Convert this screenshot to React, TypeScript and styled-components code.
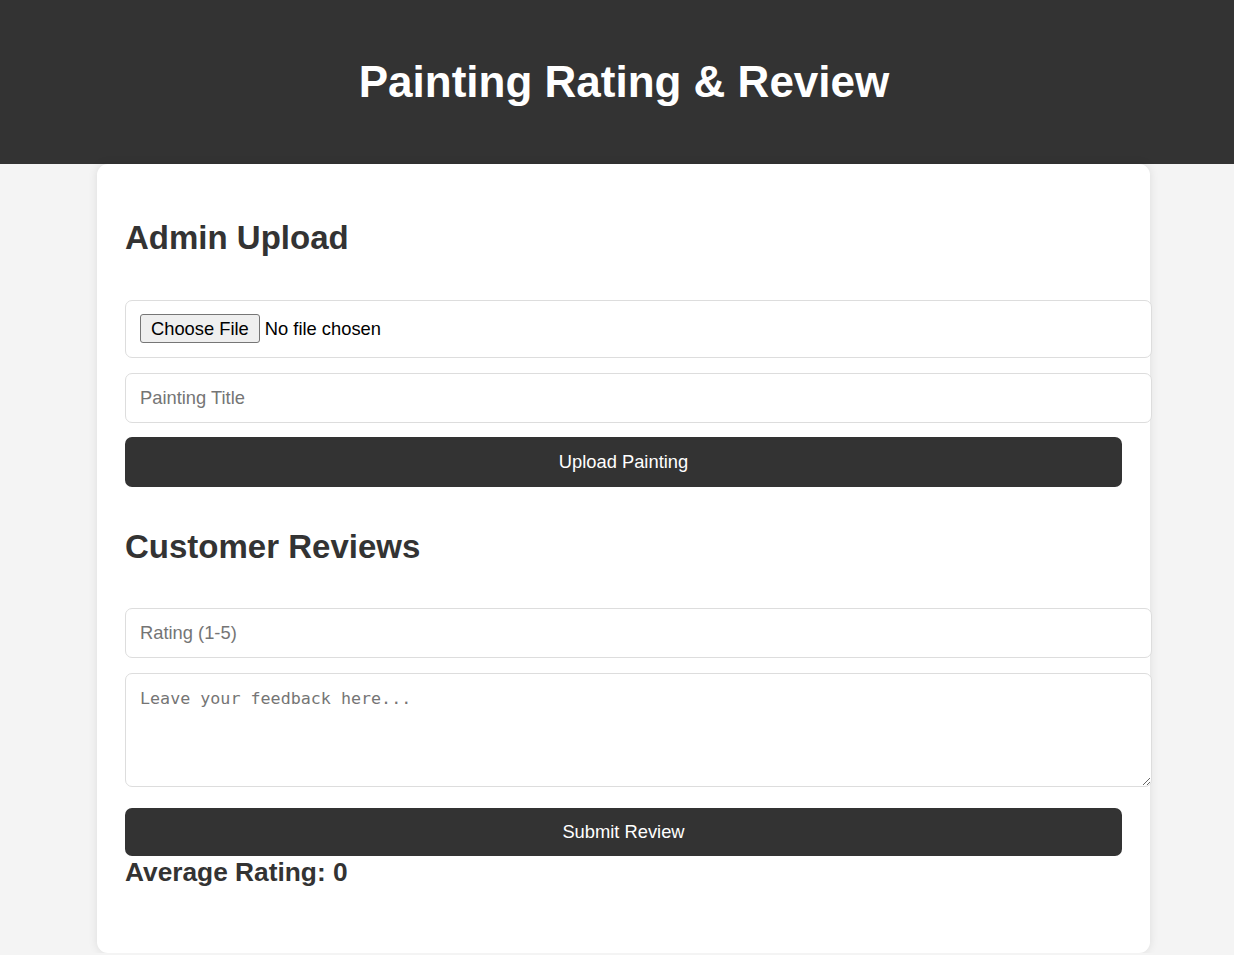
import React from "react";
import styled, { createGlobalStyle } from "styled-components";

const GlobalStyle = createGlobalStyle`
  html, body {
    margin: 0;
    padding: 0;
    background: #f4f4f4;
    font-family: "Liberation Sans", Arial, sans-serif;
    color: #333;
  }
  * { box-sizing: border-box; }
`;

const Header = styled.header`
  background: #333;
  color: #fff;
  height: 164px;
  padding: 56px 0 0 14px;
  text-align: center;
`;

const Title = styled.h1`
  margin: 0;
  font-size: 44px;
  line-height: 51px;
  font-weight: 700;
`;

const Card = styled.main`
  display: flex;
  flex-direction: column;
  align-items: flex-start;
  margin: 0 84px 0 97px;
  padding: 28px 28px;
  background: #fff;
  border-radius: 11px;
  box-shadow: 0 0 10px rgba(0, 0, 0, 0.1);
`;

const SectionTitle = styled.h2`
  margin: 27px 0 42.5px;
  font-size: 33px;
  line-height: 38px;
  font-weight: 700;
  color: #333;
`;

const fieldBase = `
  width: calc(100% + 30px);
  border: 1px solid #ddd;
  border-radius: 7px;
  background: #fff;
  font-size: 18.33px;
`;

const FileField = styled.label`
  ${fieldBase}
  display: flex;
  align-items: center;
  height: 58px;
  padding: 14px;
  margin-bottom: 15px;
  font-family: "Liberation Sans", Arial, sans-serif;
  color: #222;
  cursor: pointer;

  input { display: none; }
`;

const FileButton = styled.span`
  display: inline-flex;
  align-items: center;
  height: 29px;
  padding: 0 10px;
  margin-right: 5px;
  border: 1px solid #767676;
  border-radius: 3px;
  background: #efefef;
  color: #000;
  font-size: 18.33px;
`;

const FileStatus = styled.span`
  color: #000;
`;

const TextInput = styled.input<{ $gap?: number }>`
  ${fieldBase}
  display: block;
  height: 50px;
  padding: 0 14px;
  margin: 0 0 ${(p) => p.$gap ?? 14}px;
  font-family: "Liberation Sans", Arial, sans-serif;
  color: #222;
  outline: none;

  &::placeholder { color: #757575; }
`;

const TextArea = styled.textarea`
  ${fieldBase}
  display: block;
  height: 114px;
  padding: 14px;
  margin: 0 0 20.5px;
  font-family: "DejaVu Sans Mono", "Liberation Mono", monospace;
  font-size: 16.7px;
  line-height: 20px;
  color: #222;
  outline: none;

  &::placeholder { color: #757575; }
`;

const ActionButton = styled.button<{ $height: number; $gap: number }>`
  display: block;
  width: 100%;
  height: ${(p) => p.$height}px;
  margin: 0 0 ${(p) => p.$gap}px;
  border: none;
  border-radius: 7px;
  background: #333;
  color: #fff;
  font-family: "Liberation Sans", Arial, sans-serif;
  font-size: 18.33px;
  cursor: pointer;
`;

const Average = styled.h3`
  margin: 1px 0 38px;
  font-size: 26.3px;
  line-height: 30px;
  font-weight: 700;
  color: #333;
`;

export default function App() {
  return (
    <>
      <GlobalStyle />
      <Header>
        <Title>Painting Rating &amp; Review</Title>
      </Header>
      <Card>
        <SectionTitle>Admin Upload</SectionTitle>
        <FileField>
          <input type="file" />
          <FileButton>Choose File</FileButton>
          <FileStatus>No file chosen</FileStatus>
        </FileField>
        <TextInput type="text" placeholder="Painting Title" />
        <ActionButton $height={50} $gap={14}>Upload Painting</ActionButton>

        <SectionTitle>Customer Reviews</SectionTitle>
        <TextInput type="number" placeholder="Rating (1-5)" $gap={15} />
        <TextArea placeholder="Leave your feedback here..." />
        <ActionButton $height={48} $gap={0}>Submit Review</ActionButton>
        <Average>Average Rating: 0</Average>
      </Card>
    </>
  );
}
